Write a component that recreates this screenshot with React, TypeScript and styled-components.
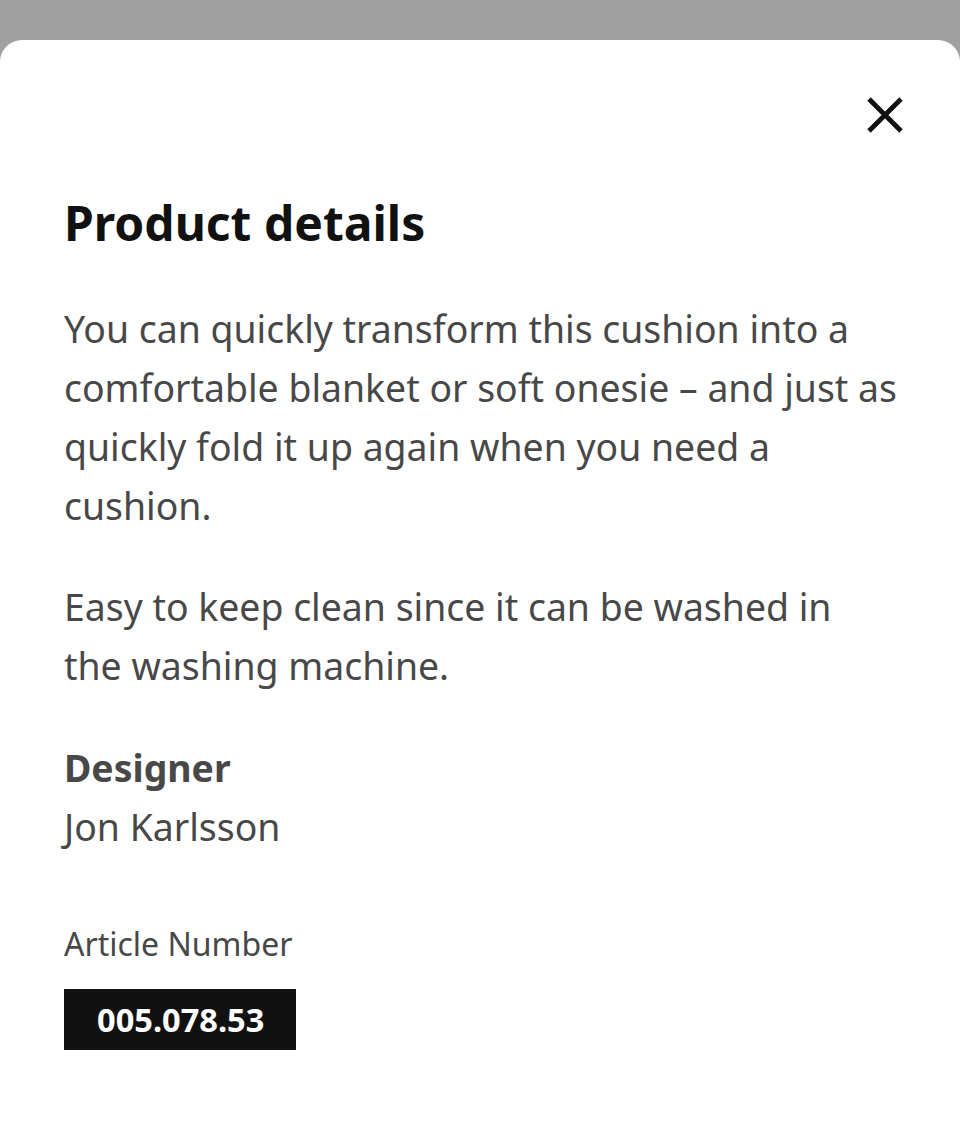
import React from "react";
import styled, { createGlobalStyle } from "styled-components";

const Global = createGlobalStyle`
  html, body { margin: 0; padding: 0; }
  body {
    background: #a0a0a0;
    font-family: "Noto Sans", "Open Sans", sans-serif;
    -webkit-font-smoothing: antialiased;
  }
`;

const Sheet = styled.div`
  margin-top: 40px;
  min-height: 1084px;
  box-sizing: border-box;
  background: #ffffff;
  border-radius: 22px 22px 0 0;
  padding: 0 62px 40px 64px;
  display: flex;
  flex-direction: column;
`;

const Header = styled.div`
  display: flex;
  justify-content: flex-end;
  padding-top: 51px;
  margin-right: -15px;
`;

const CloseButton = styled.button`
  width: 56px;
  height: 48px;
  border: 0;
  background: transparent;
  padding: 0;
  display: flex;
  align-items: center;
  justify-content: center;
  cursor: pointer;
`;

const Title = styled.h1`
  margin: 52px 0 0 0;
  font-size: 48px;
  line-height: 64px;
  font-weight: 700;
  color: #111111;
`;

const Paragraph = styled.p`
  margin: 0;
  font-size: 37.4px;
  line-height: 59px;
  color: #484848;
  & + & { margin-top: 42px; }
`;

const Body = styled.div`
  margin-top: 44px;
  display: flex;
  flex-direction: column;
`;

const Section = styled.div`
  margin-top: 43px;
  display: flex;
  flex-direction: column;
`;

const Label = styled.div`
  font-size: 37.4px;
  line-height: 59px;
  font-weight: 700;
  color: #484848;
`;

const Value = styled.div`
  font-size: 37.4px;
  line-height: 59px;
  color: #484848;
`;

const SmallLabel = styled.div`
  margin-top: 64px;
  font-size: 32px;
  line-height: 48px;
  color: #484848;
`;

const ArticleBox = styled.div`
  margin-top: 21px;
  align-self: flex-start;
  background: #111111;
  color: #ffffff;
  font-size: 32.6px;
  font-weight: 700;
  line-height: 61px;
  padding: 0 32px 0 33px;
`;

export default function App() {
  return (
    <>
      <Global />
      <Sheet>
        <Header>
          <CloseButton aria-label="Close">
            <svg width="36" height="36" viewBox="0 0 36 36">
              <path d="M2 2 L34 34 M34 2 L2 34" stroke="#111" strokeWidth="4.8" fill="none" />
            </svg>
          </CloseButton>
        </Header>
        <Title>Product details</Title>
        <Body>
          <Paragraph>
            You can quickly transform this cushion into a comfortable blanket or soft onesie – and just as quickly fold it up again when you need a cushion.
          </Paragraph>
          <Paragraph>Easy to keep clean since it can be washed in the washing machine.</Paragraph>
        </Body>
        <Section>
          <Label>Designer</Label>
          <Value>Jon Karlsson</Value>
        </Section>
        <SmallLabel>Article Number</SmallLabel>
        <ArticleBox>005.078.53</ArticleBox>
      </Sheet>
    </>
  );
}
